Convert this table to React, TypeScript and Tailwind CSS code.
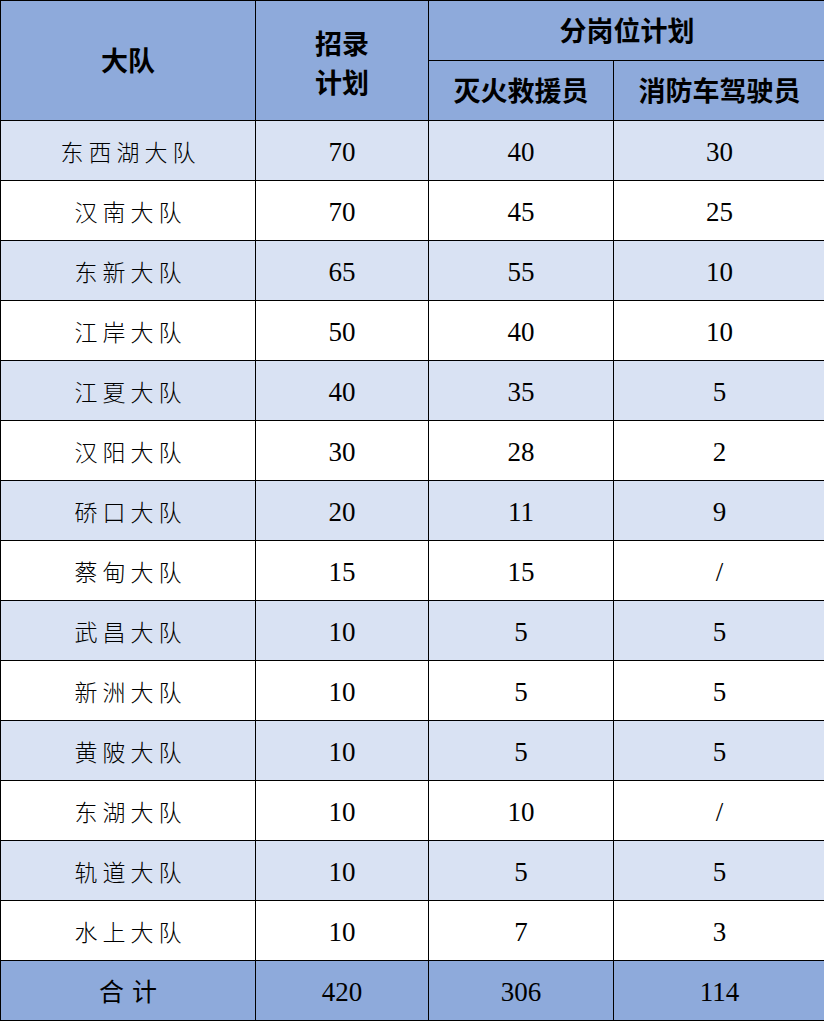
import React from 'react';

type Row = { name: string; total: string; fire: string; driver: string };

const rows: Row[] = [
  { name: '东西湖大队', total: '70', fire: '40', driver: '30' },
  { name: '汉南大队', total: '70', fire: '45', driver: '25' },
  { name: '东新大队', total: '65', fire: '55', driver: '10' },
  { name: '江岸大队', total: '50', fire: '40', driver: '10' },
  { name: '江夏大队', total: '40', fire: '35', driver: '5' },
  { name: '汉阳大队', total: '30', fire: '28', driver: '2' },
  { name: '硚口大队', total: '20', fire: '11', driver: '9' },
  { name: '蔡甸大队', total: '15', fire: '15', driver: '/' },
  { name: '武昌大队', total: '10', fire: '5', driver: '5' },
  { name: '新洲大队', total: '10', fire: '5', driver: '5' },
  { name: '黄陂大队', total: '10', fire: '5', driver: '5' },
  { name: '东湖大队', total: '10', fire: '10', driver: '/' },
  { name: '轨道大队', total: '10', fire: '5', driver: '5' },
  { name: '水上大队', total: '10', fire: '7', driver: '3' },
];

const num = "font-['Liberation_Serif','Times_New_Roman',serif] text-[27px] pt-[3px]";
const cjk = "font-['Noto_Sans_CJK_SC',sans-serif] font-light text-[23px] tracking-[5px] pl-[5px] pt-[2px]";
const head = "font-['Noto_Sans_CJK_SC',sans-serif] font-bold text-[27px]";

export default function App() {
  return (
    <div className="w-[824px] h-[1022px] overflow-hidden bg-white text-black">
      <table className="w-[825px] table-fixed border-collapse text-center">
        <colgroup>
          <col className="w-[255px]" />
          <col className="w-[173px]" />
          <col className="w-[185px]" />
          <col className="w-[212px]" />
        </colgroup>
        <thead>
          {/* Header */}
          <tr className="h-[60px] bg-[#8eaadb]">
            <td rowSpan={2} className={`border border-black ${head}`}>大队</td>
            <td rowSpan={2} className={`border border-black ${head} leading-[39px] pt-[2px]`}>
              <div>招录</div>
              <div>计划</div>
            </td>
            <td colSpan={2} className={`border border-black ${head}`}>分岗位计划</td>
          </tr>
          <tr className="h-[60px] bg-[#8eaadb]">
            <td className={`border border-black ${head}`}>灭火救援员</td>
            <td className={`border border-black ${head}`}>消防车驾驶员</td>
          </tr>
        </thead>
        <tbody>
          {rows.map((r, i) => (
            <tr key={r.name} className={`h-[60px] ${i % 2 === 0 ? 'bg-[#d9e2f3]' : 'bg-white'}`}>
              <td className={`border border-black ${cjk}`}>{r.name}</td>
              <td className={`border border-black ${num}`}>{r.total}</td>
              <td className={`border border-black ${num}`}>{r.fire}</td>
              <td className={`border border-black ${num}`}>{r.driver}</td>
            </tr>
          ))}
          {/* Totals */}
          <tr className="h-[60px] bg-[#8eaadb]">
            <td className="border border-black font-['Noto_Sans_CJK_SC',sans-serif] text-[25px] tracking-[8px] pl-[8px]">合计</td>
            <td className={`border border-black ${num}`}>420</td>
            <td className={`border border-black ${num}`}>306</td>
            <td className={`border border-black ${num}`}>114</td>
          </tr>
        </tbody>
      </table>
    </div>
  );
}
